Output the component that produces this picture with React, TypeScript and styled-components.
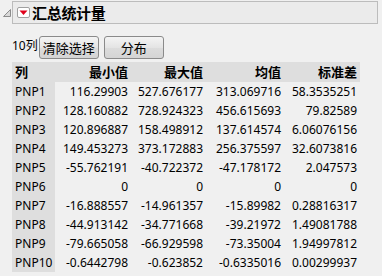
import React from "react";
import styled, {createGlobalStyle} from "styled-components";

const GlobalStyle = createGlobalStyle`
  html, body {
    margin: 0;
    padding: 0;
    background: #f0f0f0;
  }
  body {
    font-family: "Noto Sans", "Noto Sans CJK SC", sans-serif;
    color: #000;
  }
`;

const Page = styled.div`
  width: 382px;
  height: 276px;
  overflow: hidden;
  padding-top: 1px;
  box-sizing: border-box;
`;

const TitleRow = styled.div`
  display: flex;
  align-items: center;
  padding: 0 4px 0 2px;
`;

const Disclosure = styled.svg`
  width: 10px;
  height: 10px;
  flex: none;
`;

const TitleBox = styled.div`
  flex: 1;
  height: 21px;
  margin-left: 0;
  display: flex;
  align-items: center;
  gap: 2px;
  padding-left: 4px;
  border: 1px solid #bcbcbc;
  background: #ebebeb;
`;

const MenuButton = styled.svg`
  width: 13px;
  height: 11px;
  flex: none;
`;

const Title = styled.span`
  font-family: "Noto Sans CJK SC", sans-serif;
  font-weight: bold;
  font-size: 15px;
  line-height: 20px;
  letter-spacing: -0.3px;
`;

const Content = styled.div`
  padding-left: 12px;
`;

const Toolbar = styled.div`
  display: flex;
  align-items: center;
  margin-top: 11px;
  height: 24px;
`;

const Count = styled.span`
  font-family: "Noto Sans", "Noto Sans CJK SC", sans-serif;
  font-size: 12px;
  margin-right: 1px;
  margin-top: -4px;
`;

const Button = styled.button`
  width: 60px;
  height: 23px;
  margin-right: 5px;
  padding: 0;
  font-family: "Noto Sans CJK SC", sans-serif;
  font-size: 13px;
  color: #000;
  border: 1px solid #8a8a8a;
  border-radius: 3px;
  background: linear-gradient(#f4f4f4, #e4e4e4 50%, #dcdcdc 51%, #d4d4d4);
`;

const Grid = styled.div`
  display: grid;
  grid-template-columns: 43px 76px 75px 78px 76px;
  margin-top: 3px;
  font-size: 12px;
`;

const HeadCell = styled.div<{$left?: boolean}>`
  height: 20px;
  line-height: 20px;
  background: #dedede;
  font-family: "Noto Sans CJK SC", sans-serif;
  font-weight: bold;
  font-size: 13px;
  text-align: ${(p) => (p.$left ? "left" : "right")};
  padding: 0 3px;
`;

const Cell = styled.div<{$name?: boolean}>`
  height: 19px;
  line-height: 19px;
  background: ${(p) => (p.$name ? "#dedede" : "transparent")};
  text-align: ${(p) => (p.$name ? "left" : "right")};
  padding: 0 3px;
  white-space: nowrap;
`;

const rows: string[][] = [
  ["PNP1", "116.29903", "527.676177", "313.069716", "58.3535251"],
  ["PNP2", "128.160882", "728.924323", "456.615693", "79.82589"],
  ["PNP3", "120.896887", "158.498912", "137.614574", "6.06076156"],
  ["PNP4", "149.453273", "373.172883", "256.375597", "32.6073816"],
  ["PNP5", "-55.762191", "-40.722372", "-47.178172", "2.047573"],
  ["PNP6", "0", "0", "0", "0"],
  ["PNP7", "-16.888557", "-14.961357", "-15.89982", "0.28816317"],
  ["PNP8", "-44.913142", "-34.771668", "-39.21972", "1.49081788"],
  ["PNP9", "-79.665058", "-66.929598", "-73.35004", "1.94997812"],
  ["PNP10", "-0.6442798", "-0.623852", "-0.6335016", "0.00299937"],
];

const headers = ["列", "最小值", "最大值", "均值", "标准差"];

const App: React.FC = () => {
  return (
    <Page>
      <GlobalStyle />
      <TitleRow>
        <Disclosure viewBox="0 0 10 10">
          <path d="M8.5 1.5 L8.5 8.5 L1.5 8.5 Z" fill="#d8d8d8" stroke="#8c8c8c" strokeWidth="1" />
        </Disclosure>
        <TitleBox>
          <MenuButton viewBox="0 0 13 11">
            <rect x="0.5" y="0.5" width="12" height="10" rx="1.5" fill="#fff" stroke="#a0a0a0" />
            <path d="M2.5 3.5 L10.5 3.5 L6.5 8 Z" fill="#e0001a" />
          </MenuButton>
          <Title>汇总统计量</Title>
        </TitleBox>
      </TitleRow>
      <Content>
        <Toolbar>
          <Count>10列</Count>
          <Button>清除选择</Button>
          <Button>分布</Button>
        </Toolbar>
        <Grid>
          {headers.map((h, i) => (
            <HeadCell key={h} $left={i === 0}>{h}</HeadCell>
          ))}
          {rows.map((r) =>
            r.map((v, i) => (
              <Cell key={r[0] + i} $name={i === 0}>{v}</Cell>
            ))
          )}
        </Grid>
      </Content>
    </Page>
  );
};

export default App;
